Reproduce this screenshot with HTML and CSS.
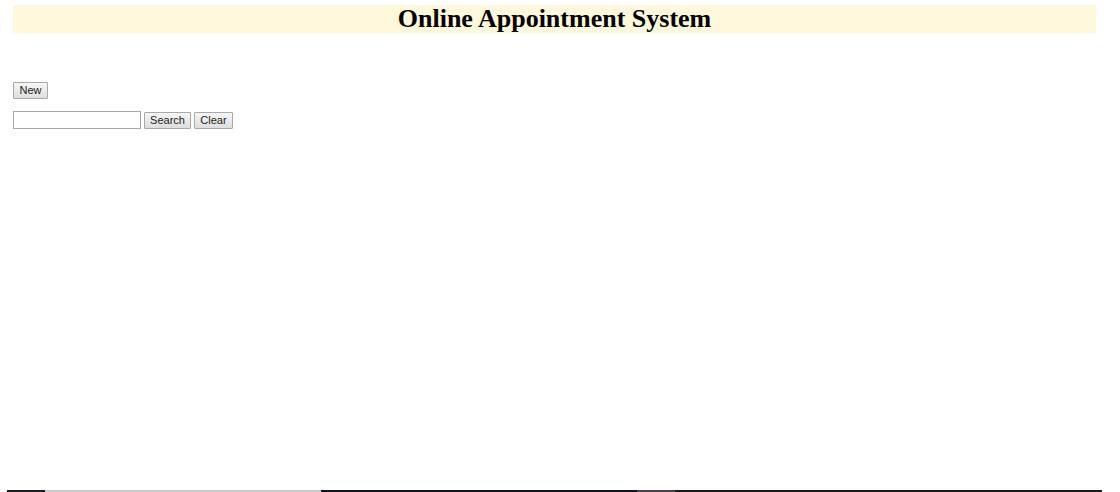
FILE: index.html
```html
<!DOCTYPE html>
<html>
<head>
<meta charset="utf-8">
<title>Online Appointment System</title>
<link rel="stylesheet" href="styles.css">
</head>
<body>
<div class="page">
  <div class="header"><h1 class="title">Online Appointment System</h1></div>
  <div class="toolbar">
    <button class="btn btn-new">New</button>
  </div>
  <div class="searchbar">
    <input class="search-input" type="text">
    <button class="btn btn-search">Search</button>
    <button class="btn btn-clear">Clear</button>
  </div>
  <div class="spacer"></div>
  <div class="strip">
    <span class="seg s1"></span>
    <span class="seg s2"></span>
    <span class="seg s3"></span>
    <span class="seg s4"></span>
    <span class="seg s5"></span>
  </div>
</div>
</body>
</html>
```
FILE: styles.css
```css
html, body {
  margin: 0;
  padding: 0;
  background: #ffffff;
  height: 100%;
}
.page {
  display: flex;
  flex-direction: column;
  height: 492px;
  box-sizing: border-box;
  padding: 5px 24px 0 13px;
  font-family: "Liberation Sans", Arial, sans-serif;
}
.header {
  background: #fff8dc;
  height: 28px;
  display: flex;
  align-items: center;
  justify-content: center;
}
.title {
  margin: 0;
  font-family: "Liberation Serif", "Times New Roman", serif;
  font-weight: bold;
  font-size: 26px;
  line-height: 28px;
  color: #000;
}
.toolbar {
  margin-top: 49px;
  display: flex;
}
.searchbar {
  margin-top: 12px;
  display: flex;
  align-items: center;
  gap: 3px;
}
.btn {
  font-family: "Liberation Sans", Arial, sans-serif;
  font-size: 11px;
  line-height: 13px;
  color: #222;
  background: linear-gradient(#f6f6f6, #dedede);
  border: 1px solid #a9a9a9;
  border-radius: 1px;
  height: 17px;
  box-sizing: border-box;
  margin: 0;
}
.btn-new { width: 35px; padding: 1px 0; }
.btn-search { width: 47px; padding: 1px 0; }
.btn-clear { width: 39px; padding: 1px 0; }
.search-input {
  width: 128px;
  height: 18px;
  box-sizing: border-box;
  border: 1px solid #a9a9a9;
  margin: 0;
  padding: 1px 2px;
}
.spacer { flex: 1; }
.strip {
  display: flex;
  height: 2px;
  margin-left: -6px;
  margin-right: -6px;
}
.seg { display: block; height: 2px; }
.s1 { width: 38px; background: #1a1c20; }
.s2 { width: 276px; background: #c8c8c8; }
.s3 { width: 316px; background: #12141f; }
.s4 { width: 38px; background: #4a4248; }
.s5 { flex: 1; background: #1c1a1a; }
```
